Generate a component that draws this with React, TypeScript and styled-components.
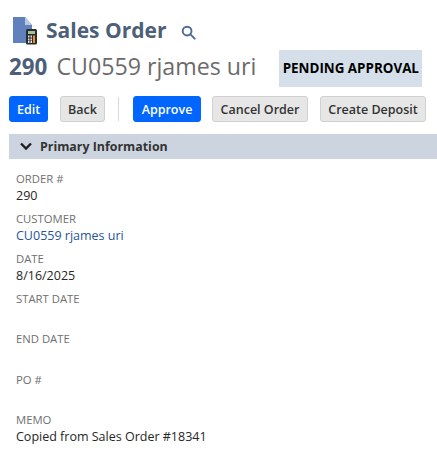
import React from 'react'
import styled, { createGlobalStyle } from 'styled-components'

const GlobalStyle = createGlobalStyle`
  html, body {
    margin: 0;
    padding: 0;
    background: #ffffff;
    font-family: "Open Sans", "Liberation Sans", sans-serif;
  }
`

const Page = styled.div`
  width: 437px;
  height: 453px;
  overflow: hidden;
  padding: 17px 0 0 9px;
  box-sizing: border-box;
`

const TitleRow = styled.div`
  display: flex;
  align-items: center;
  height: 29px;
`

const Title = styled.h1`
  margin: -2px 0 0 5px;
  font-size: 21px;
  line-height: 29px;
  font-weight: 700;
  color: #4d5f79;
`

const SearchLink = styled.span`
  display: flex;
  margin-left: 15px;
  margin-top: 1px;
`

const RecordRow = styled.div`
  display: flex;
  align-items: center;
  height: 42px;
  margin-top: -1px;
`

const RecordNumber = styled.span`
  font-size: 22.4px;
  font-weight: 700;
  color: #4d5f79;
`

const RecordName = styled.span`
  margin-left: 9px;
  font-size: 23.2px;
  color: #6b6b6b;
`

const StatusBadge = styled.div`
  margin: 4px 0 0 23px;
  width: 143px;
  height: 37px;
  background: #d5dfe9;
  display: flex;
  align-items: center;
  justify-content: center;
  font-size: 13.4px;
  font-weight: 700;
  color: #000000;
  white-space: nowrap;
`

const Toolbar = styled.div`
  display: flex;
  align-items: center;
  margin-top: 9px;
`

const Button = styled.button<{ $primary?: boolean; $gap: number; $width: number }>`
  margin-left: ${({ $gap }) => $gap}px;
  width: ${({ $width }) => $width}px;
  height: 26px;
  padding: 0;
  border-radius: 3px;
  font-family: inherit;
  font-size: 12.5px;
  font-weight: 600;
  white-space: nowrap;
  border: 1px solid ${({ $primary }) => ($primary ? '#0066ff' : '#d0d0d0')};
  background: ${({ $primary }) => ($primary ? '#0066ff' : '#e6e6e6')};
  color: ${({ $primary }) => ($primary ? '#ffffff' : '#333333')};
`

const Divider = styled.div`
  width: 1px;
  height: 24px;
  margin-left: 13px;
  background: #d9d9d9;
`

const SectionBar = styled.div`
  display: flex;
  align-items: center;
  height: 25px;
  margin-top: 12px;
  padding-left: 10px;
  background: #ccd5df;
`

const SectionTitle = styled.span`
  margin-left: 7px;
  font-size: 12.4px;
  font-weight: 700;
  color: #333333;
`

const Fields = styled.div`
  padding: 11.7px 0 0 7px;
`

const Field = styled.div`
  height: 40.2px;
`

const Label = styled.div`
  font-size: 11.3px;
  line-height: 16px;
  color: #6f6f6f;
`

const Value = styled.div<{ $link?: boolean }>`
  font-size: 12.5px;
  line-height: 18px;
  color: ${({ $link }) => ($link ? '#255599' : '#262626')};
`

function RecordIcon() {
  return (
    <svg width="32" height="29" viewBox="0 0 32 29">
      <path d="M4 0h12l7 8v18H4z" fill="#5f82bf" />
      <path d="M16 0l7 8h-7z" fill="#b9c8e0" />
      <rect x="17" y="12" width="11" height="15.5" rx="1.5" fill="#2b2b2b" />
      <rect x="19" y="14" width="7" height="3" fill="#9ec29a" />
      <path d="M19 18.5h1.5v2H19zM21.5 18.5H23v2h-1.5zM19 21.5h1.5v2H19zM21.5 21.5H23v2h-1.5zM19 24h1.5v2H19zM21.5 24H23v2h-1.5z" fill="#e4e4e4" />
      <path d="M24 18.5h2V26h-2z" fill="#e8902e" />
    </svg>
  )
}

function SearchIcon() {
  return (
    <svg width="15" height="15" viewBox="0 0 16 16" fill="none" stroke="#4d6a94" strokeWidth="2">
      <circle cx="6.5" cy="6.5" r="4.7" />
      <path d="M10 10l4.6 4.6" strokeLinecap="round" />
    </svg>
  )
}

function ChevronIcon() {
  return (
    <svg width="14" height="9" viewBox="0 0 14 9" fill="none" stroke="#1f1f1f" strokeWidth="2.4">
      <path d="M2 1.5l5 5 5-5" />
    </svg>
  )
}

const fields: { label: string; value?: string; link?: boolean }[] = [
  { label: 'ORDER #', value: '290' },
  { label: 'CUSTOMER', value: 'CU0559 rjames uri', link: true },
  { label: 'DATE', value: '8/16/2025' },
  { label: 'START DATE' },
  { label: 'END DATE' },
  { label: 'PO #' },
  { label: 'MEMO', value: 'Copied from Sales Order #18341' },
]

export default function App() {
  return (
    <Page>
      <GlobalStyle />
      <TitleRow>
        <RecordIcon />
        <Title>Sales Order</Title>
        <SearchLink>
          <SearchIcon />
        </SearchLink>
      </TitleRow>
      <RecordRow>
        <RecordNumber>290</RecordNumber>
        <RecordName>CU0559 rjames uri</RecordName>
        <StatusBadge>PENDING APPROVAL</StatusBadge>
      </RecordRow>
      <Toolbar>
        <Button $primary $gap={0} $width={39}>Edit</Button>
        <Button $gap={12} $width={45}>Back</Button>
        <Divider />
        <Button $primary $gap={14} $width={68}>Approve</Button>
        <Button $gap={11} $width={96}>Cancel Order</Button>
        <Button $gap={12} $width={106}>Create Deposit</Button>
      </Toolbar>
      <SectionBar>
        <ChevronIcon />
        <SectionTitle>Primary Information</SectionTitle>
      </SectionBar>
      <Fields>
        {fields.map((field) => (
          <Field key={field.label}>
            <Label>{field.label}</Label>
            {field.value && <Value $link={field.link}>{field.value}</Value>}
          </Field>
        ))}
      </Fields>
    </Page>
  )
}
